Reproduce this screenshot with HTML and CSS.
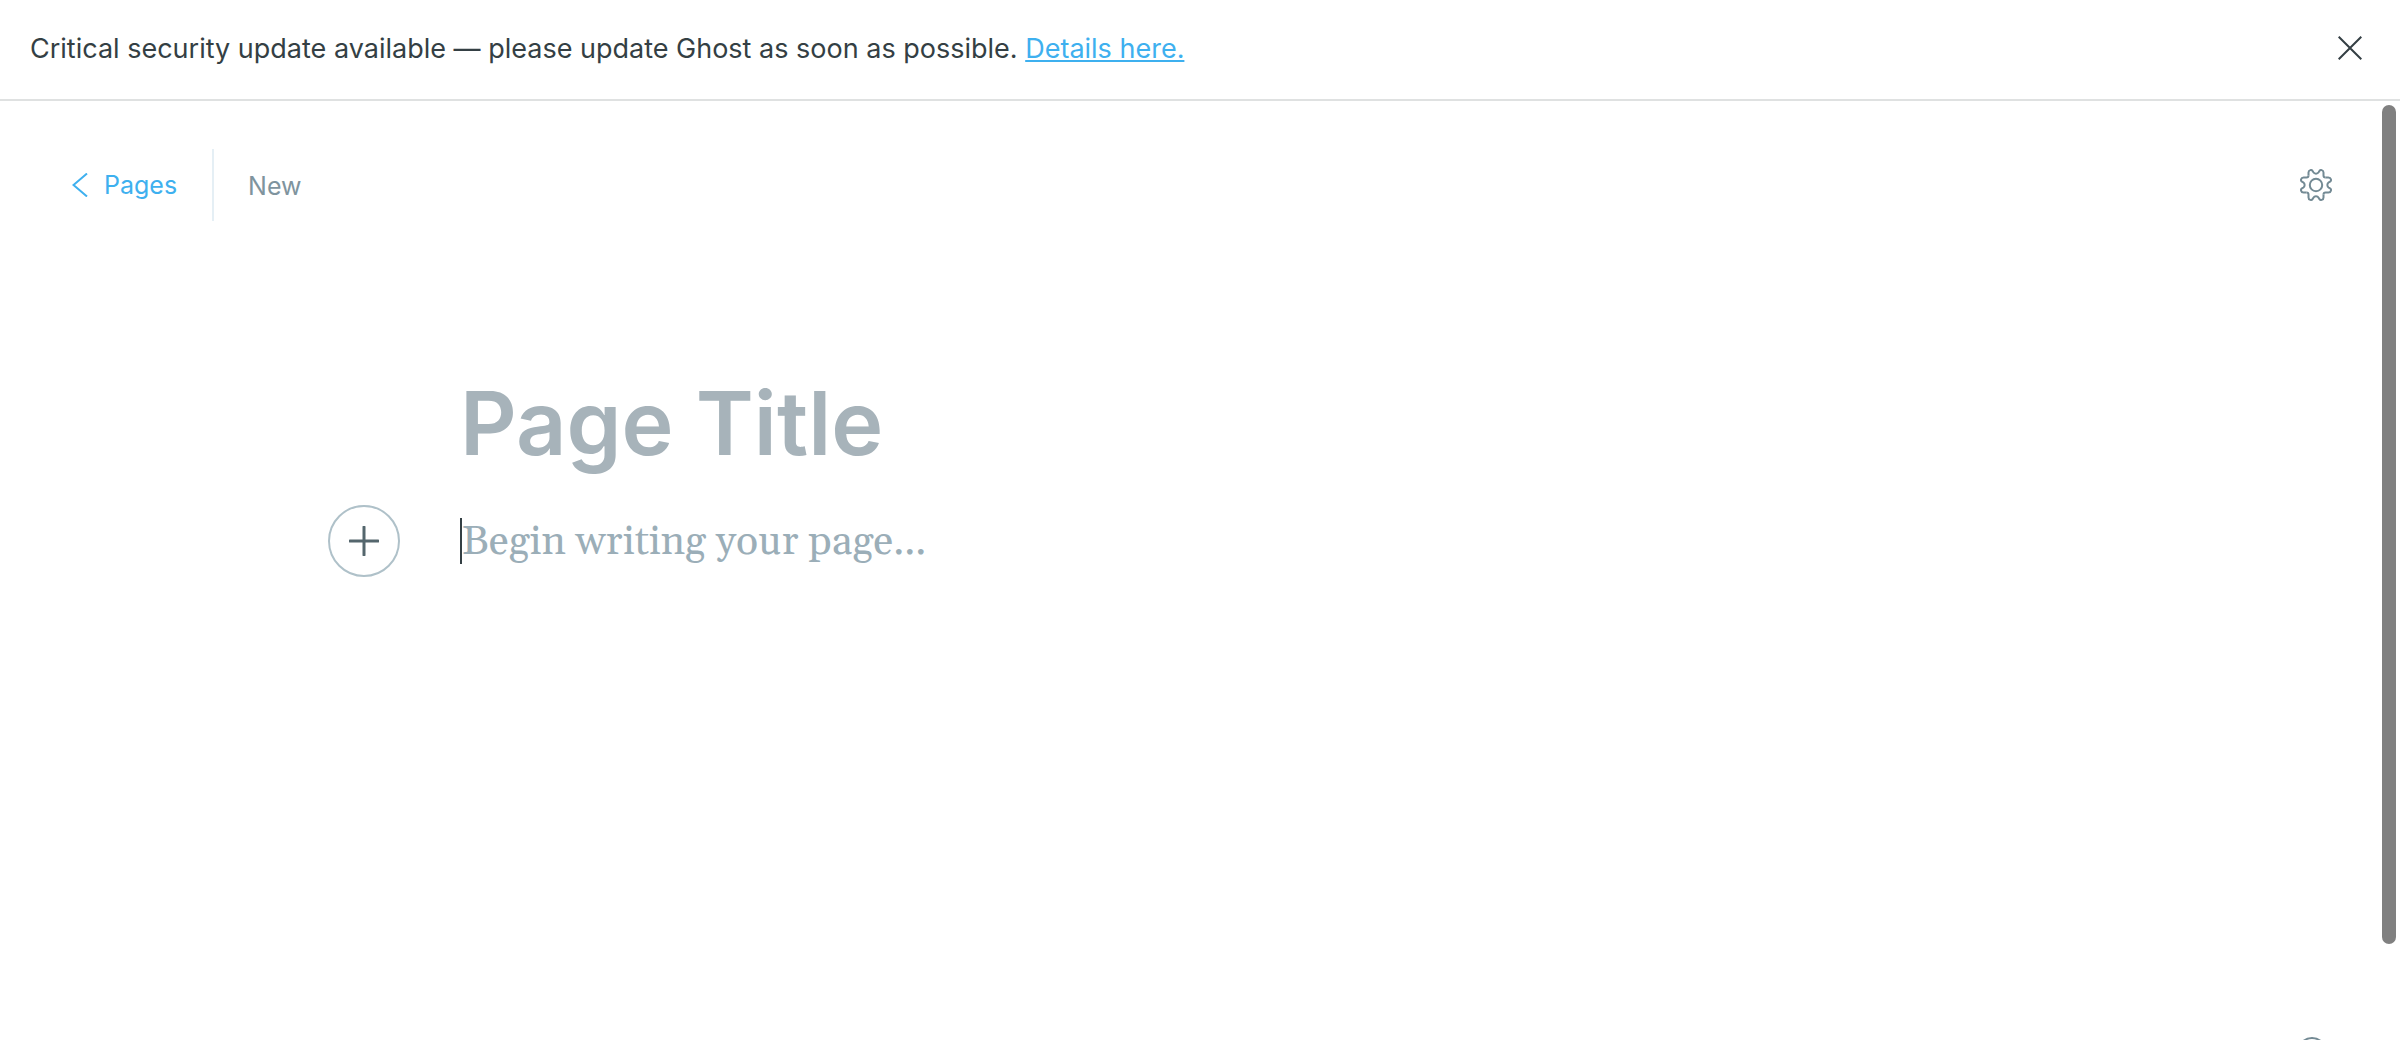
FILE: index.html
```html
<!DOCTYPE html>
<html lang="en">
<head>
<meta charset="utf-8">
<title>New page - Ghost</title>
<meta name="viewport" content="width=device-width, initial-scale=1">
<link rel="stylesheet" href="styles.css">
</head>
<body>
<aside class="alert" role="alert">
  <p class="alert-text">Critical security update available — please update Ghost as soon as possible. <a class="alert-link" href="#details">Details here.</a></p>
  <button class="icon-button" type="button" aria-label="Close">
    <svg class="icon-close" viewBox="0 0 24 24" aria-hidden="true"><path d="M.7.7l22.6 22.6M23.3.7L.7 23.3"/></svg>
  </button>
</aside>
<main class="editor">
  <header class="toolbar">
    <nav class="breadcrumb">
      <a class="back" href="#pages"><svg class="icon-back" viewBox="0 0 16 24" aria-hidden="true"><path d="M15 .5L1.500 12 15 23.500"/></svg>Pages</a>
      <span class="status">New</span>
    </nav>
    <button class="icon-button" type="button" aria-label="Settings">
      <svg class="icon-gear" viewBox="0 0 32 32" aria-hidden="true">
        <circle cx="16" cy="16" r="6.200"/>
        <path id="cog" d="M8.500 6.500V3.600C8.500 .8 11.800 .2 12.800 2.200L13.400 3.300C14.500 5.100 17.500 5.100 18.600 3.300L19.200 2.200C20.200 .2 23.500 .8 23.500 3.600V6.500C23.500 7.800 24.200 8.500 25.500 8.500"/>
        <use href="#cog" transform="rotate(90 16 16)"/>
        <use href="#cog" transform="rotate(180 16 16)"/>
        <use href="#cog" transform="rotate(270 16 16)"/>
      </svg>
    </button>
  </header>
  <section class="canvas">
    <input class="title" type="text" placeholder="Page Title" aria-label="Page title">
    <div class="row">
      <button class="add" type="button" aria-label="Add a card">
        <svg class="icon-plus" viewBox="0 0 30 30" aria-hidden="true"><path d="M15 1v28M1 15h28"/></svg>
      </button>
      <input class="body-text" type="text" placeholder="Begin writing your page..." aria-label="Page content">
    </div>
  </section>
  <div class="scroll-thumb"></div>
  <button class="help" type="button" aria-label="Help"></button>
</main>
</body>
</html>
```
FILE: styles.css
```css
* { box-sizing: border-box; }

body {
  margin: 0;
  height: 100vh;
  display: flex;
  flex-direction: column;
  overflow: hidden;
  background: #fff;
  color: #343f44;
  font-family: Inter, "Liberation Sans", sans-serif;
  font-size: 27px;
  line-height: 36px;
}

button, input {
  margin: 0;
  padding: 0;
  border: 0;
  background: none;
  font: inherit;
  outline: 0;
}

a { color: #3eb0ef; }

svg { display: block; fill: none; stroke: currentColor; }

.alert {
  display: flex;
  align-items: center;
  justify-content: space-between;
  padding: 29px 38px 32px 30px;
  border-bottom: 2px solid #dfe1e1;
}

.alert-text { margin: 0; padding-top: 2px; }

.alert-link { text-underline-offset: 2px; text-decoration-thickness: 2px; }

.icon-button { color: #343f44; cursor: pointer; }

.icon-close { width: 24px; height: 24px; stroke-width: 2; }

.editor {
  position: relative;
  flex: 1;
  overflow: hidden;
}

.toolbar {
  display: flex;
  align-items: center;
  justify-content: space-between;
  padding: 48px 68px 0 72px;
}

.toolbar .icon-button { color: #738a94; }

.breadcrumb {
  display: flex;
  align-items: center;
  height: 72px;
  font-size: 25px;
  line-height: 38px;
}

.back {
  display: flex;
  align-items: center;
  gap: 16px;
  height: 100%;
  padding-right: 35px;
  border-right: 2px solid #e5eff5;
  text-decoration: none;
}

.icon-back { width: 16px; height: 24px; stroke-width: 2; }

.status { padding: 2px 0 0 34px; color: #7f949e; }

.icon-gear { width: 32px; height: 32px; stroke-width: 2; }

.canvas {
  max-width: 1480px;
  margin: 0 auto;
  padding-top: 144px;
}

.title {
  display: block;
  width: 100%;
  height: 116px;
  font-size: 88px;
  font-weight: 600;
}

.title::placeholder { color: #a7b3ba; opacity: 1; }

.row { position: relative; display: flex; align-items: center; margin-top: 37px; }

.add {
  position: absolute;
  left: -132px;
  display: grid;
  place-items: center;
  width: 72px;
  height: 72px;
  border: 2px solid #afc1c9;
  border-radius: 50%;
  color: #54666d;
}

.icon-plus { width: 30px; height: 30px; stroke-width: 3; stroke-linecap: round; }

.body-text {
  width: 100%;
  height: 46px;
  padding-top: 2px;
  border-left: 2px solid #343f44;
  font-family: Georgia, Gelasio, "Liberation Serif", serif;
  font-size: 41px;
}

.body-text::placeholder { color: #9baeb8; opacity: 1; }

.scroll-thumb {
  position: absolute;
  top: 4px;
  right: 4px;
  width: 14px;
  height: 89.4%;
  border-radius: 7px;
  background: #808080;
}

.help {
  position: absolute;
  right: 73px;
  bottom: -27px;
  width: 30px;
  height: 30px;
  border: 2px solid #738a94;
  border-radius: 50%;
}
```
